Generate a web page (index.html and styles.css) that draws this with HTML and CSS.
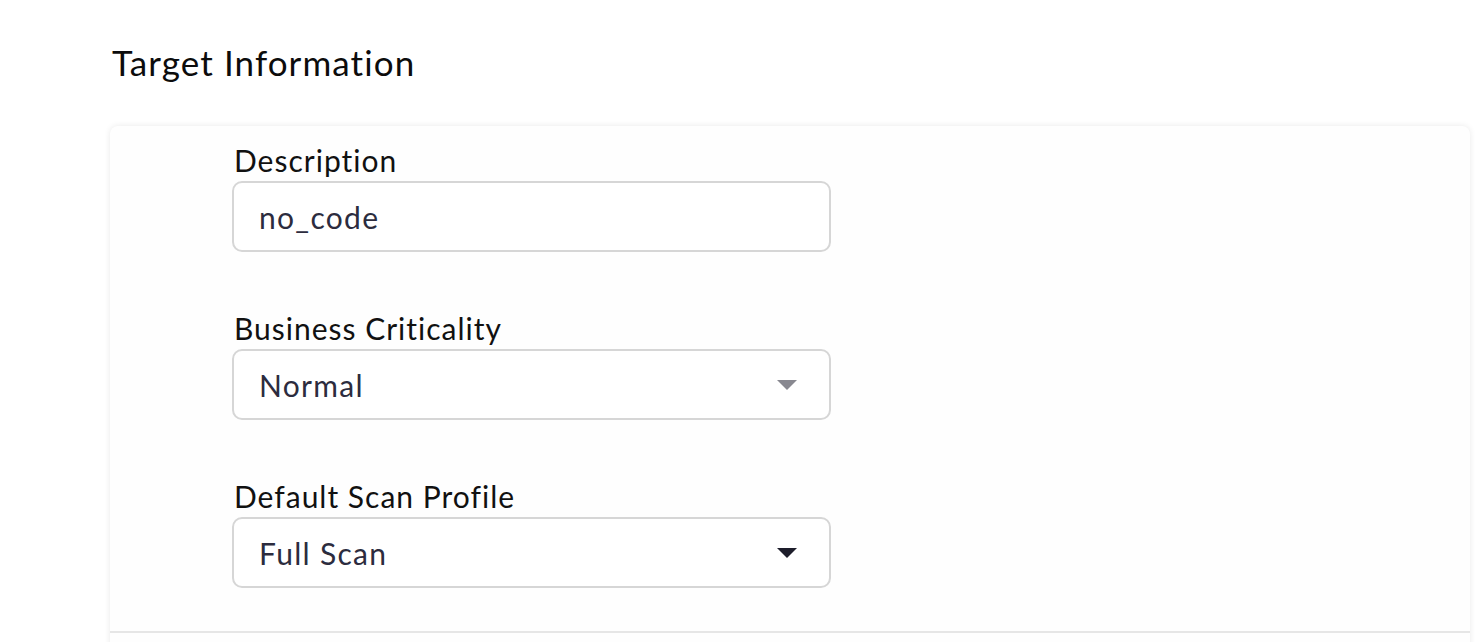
FILE: index.html
```html
<!DOCTYPE html>
<html>
<head>
<meta charset="utf-8">
<link rel="stylesheet" href="styles.css">
</head>
<body>
<main class="page">
  <h1 class="title">Target Information</h1>
  <section class="card">
    <div class="form">
      <div class="field">
        <label class="label">Description</label>
        <div class="input">no_code</div>
      </div>
      <div class="field">
        <label class="label">Business Criticality</label>
        <div class="input select">
          <span>Normal</span>
          <span class="caret caret-muted"></span>
        </div>
      </div>
      <div class="field">
        <label class="label">Default Scan Profile</label>
        <div class="input select">
          <span>Full Scan</span>
          <span class="caret caret-dark"></span>
        </div>
      </div>
    </div>
    <div class="divider"></div>
  </section>
</main>
</body>
</html>
```
FILE: styles.css
```css
html, body {
  margin: 0;
  padding: 0;
  background: #ffffff;
  overflow: hidden;
}
body {
  font-family: "Lato", "Noto Sans", sans-serif;
  color: #111111;
}
.page {
  padding: 40px 6px 0 110px;
}
.title {
  margin: 0 0 0 2px;
  font-size: 35px;
  letter-spacing: 1.1px;
  font-weight: 400;
  line-height: 44px;
  color: #0c0c0c;
}
.card {
  margin-top: 42px;
  background: #fefefe;
  border-radius: 8px 8px 0 0;
  box-shadow: 0 0 6px rgba(0, 0, 0, 0.09);
  height: 600px;
}
.form {
  padding: 18px 0 0 122px;
  display: flex;
  flex-direction: column;
  gap: 60px;
}
.field {
  display: flex;
  flex-direction: column;
  gap: 5px;
}
.label {
  font-size: 30px;
  letter-spacing: 1px;
  line-height: 32px;
  padding-left: 2px;
  color: #111111;
}
.input {
  box-sizing: border-box;
  width: 599px;
  height: 71px;
  border: 2px solid #d6d6d6;
  border-radius: 10px;
  background: #ffffff;
  padding: 0 24px 0 25px;
  display: flex;
  align-items: center;
  font-size: 30px;
  letter-spacing: 1.3px;
  color: #2c2c3e;
}
.select {
  justify-content: space-between;
}
.caret {
  width: 0;
  height: 0;
  border-left: 10px solid transparent;
  border-right: 10px solid transparent;
  border-top: 10px solid #888890;
  margin-right: 8px;
}
.caret-dark {
  border-top-color: #1d1d2b;
}
.divider {
  margin-top: 43px;
  height: 2px;
  background: #e6e6e6;
}
```
